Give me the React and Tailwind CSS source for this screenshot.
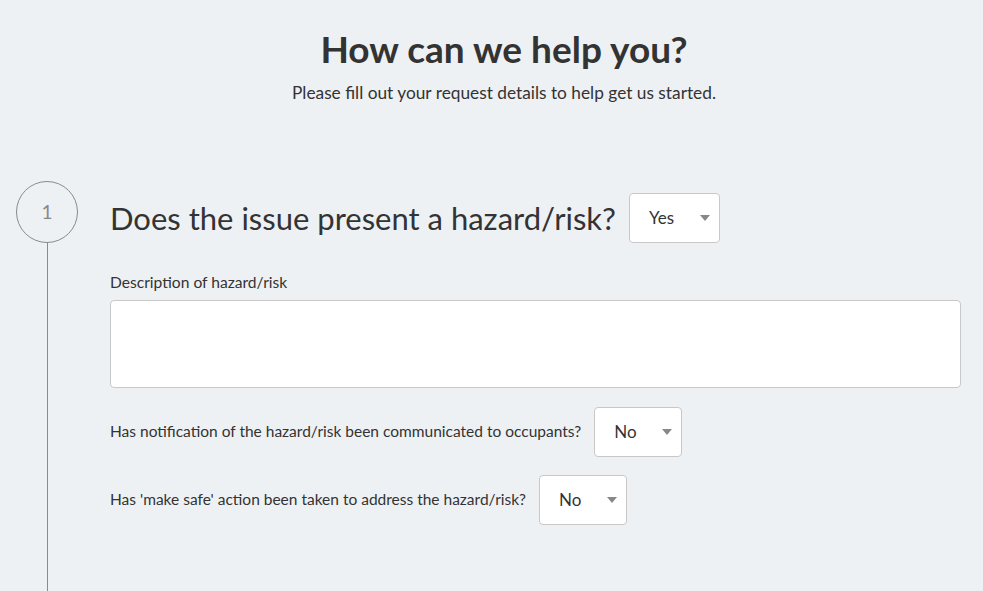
import React from 'react';

function Caret() {
  return (
    <svg width="10" height="6" viewBox="0 0 10 6" className="shrink-0">
      <path d="M0 0 L10 0 L5 6 Z" fill="#888" />
    </svg>
  );
}

function Select({ value, width }) {
  return (
    <div
      className={`flex h-[50px] items-center justify-between rounded-[4px] border border-[#c8c8c8] bg-white pl-[19px] pr-[9px] ${width}`}
    >
      <span className="text-[17px] text-[#333]">{value}</span>
      <Caret />
    </div>
  );
}

function App() {
  return (
    <div
      className="h-[591px] overflow-hidden bg-[#eef1f4] text-[#333]"
      style={{ fontFamily: 'Lato, "Open Sans", sans-serif' }}
    >
      {/* Header */}
      <div className="pl-[25px] pt-[24px] text-center">
        <h1 className="text-[37px] font-bold leading-[50px] text-[#333]">How can we help you?</h1>
        <p className="mt-[7px] text-[17.3px] leading-[24px] text-[#333]">
          Please fill out your request details to help get us started.
        </p>
      </div>

      {/* Step 1 */}
      <div className="mt-[76px] flex">
        <div className="flex w-[110px] shrink-0 flex-col items-start pl-[16px]">
          <div className="flex h-[62px] w-[62px] items-center justify-center rounded-full border border-[#8a8a8a] text-[19px] text-[#888]">
            1
          </div>
          <div className="ml-[30.5px] h-[400px] w-[1.5px] bg-[#8a8a8a]" />
        </div>

        <div className="flex-1 pr-[22px] pt-[12px]">
          <div className="flex items-center gap-[13px]">
            <h2 className="text-[31px] leading-[40px] text-[#333]">Does the issue present a hazard/risk?</h2>
            <Select value="Yes" width="w-[91px]" />
          </div>

          <label className="mt-[29px] block text-[15.6px] leading-[20px] text-[#333]">
            Description of hazard/risk
          </label>
          <div className="mt-[8px] h-[88px] rounded-[4px] border border-[#c8c8c8] bg-white" />

          <div className="mt-[19px] flex items-center gap-[13px]">
            <span className="text-[15.5px] text-[#333]">
              Has notification of the hazard/risk been communicated to occupants?
            </span>
            <Select value="No" width="w-[88px]" />
          </div>

          <div className="mt-[18px] flex items-center gap-[13px]">
            <span className="text-[15.5px] text-[#333]">
              Has 'make safe' action been taken to address the hazard/risk?
            </span>
            <Select value="No" width="w-[88px]" />
          </div>
        </div>
      </div>
    </div>
  );
}

export default App;
